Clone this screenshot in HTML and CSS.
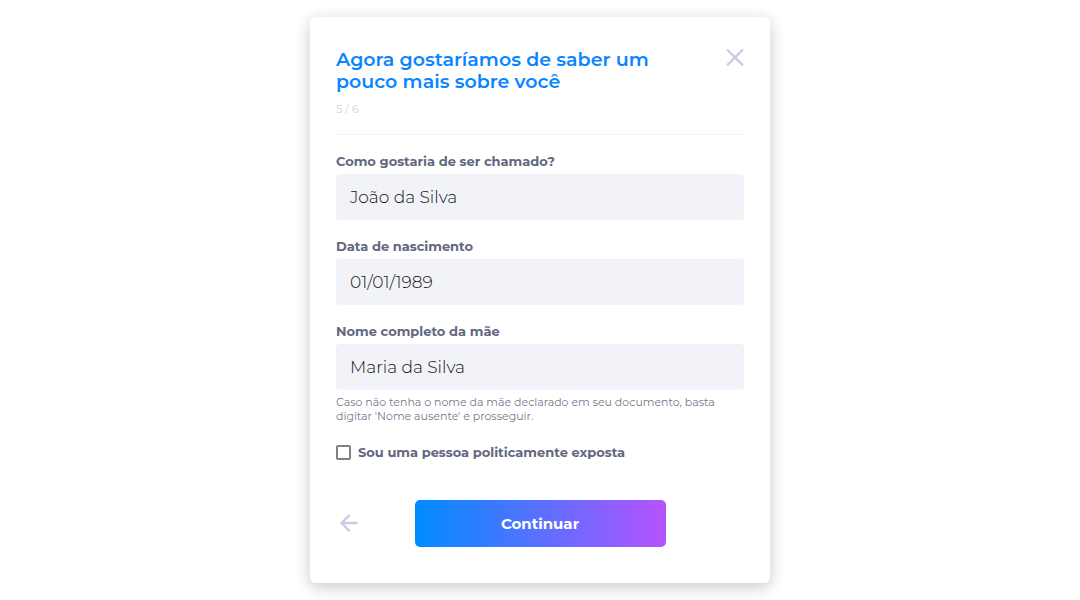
FILE: index.html
```html
<!DOCTYPE html>
<html lang="pt-BR">
<head>
<meta charset="utf-8">
<meta name="viewport" content="width=device-width, initial-scale=1">
<title>Cadastro</title>
<link rel="stylesheet" href="styles.css">
</head>
<body>
<main class="page">
  <form class="card">
    <header class="header">
      <div class="heading">
        <h1 class="title">Agora gostaríamos de saber um pouco mais sobre você</h1>
        <p class="step">5 / 6</p>
      </div>
      <button class="icon-button" type="button" aria-label="Fechar">
        <svg width="18" height="18" viewBox="0 0 18 18" fill="none" stroke="currentColor" stroke-width="2.3" stroke-linecap="round"><path d="M1.8 2.2 16.2 16.6M16.2 2.2 1.8 16.6"/></svg>
      </button>
    </header>
    <div class="fields">
      <div class="field">
        <label class="label" for="name">Como gostaria de ser chamado?</label>
        <input class="input" id="name" type="text" value="João da Silva">
      </div>
      <div class="field">
        <label class="label" for="birth">Data de nascimento</label>
        <input class="input" id="birth" type="text" value="01/01/1989">
      </div>
      <div class="field">
        <label class="label" for="mother">Nome completo da mãe</label>
        <input class="input" id="mother" type="text" value="Maria da Silva" aria-describedby="mother-hint">
        <p class="hint" id="mother-hint">Caso não tenha o nome da mãe declarado em seu documento, basta digitar 'Nome ausente' e prosseguir.</p>
      </div>
    </div>
    <div class="check">
      <input class="checkbox" id="exposed" type="checkbox">
      <label class="label" for="exposed">Sou uma pessoa politicamente exposta</label>
    </div>
    <footer class="actions">
      <button class="icon-button back" type="button" aria-label="Voltar">
        <svg width="18" height="18" viewBox="0 0 18 18" fill="none" stroke="currentColor" stroke-width="2.3" stroke-linecap="round" stroke-linejoin="round"><path d="M16.5 9H1.5M9 1.5 1.5 9 9 16.5"/></svg>
      </button>
      <button class="submit" type="submit">Continuar</button>
    </footer>
  </form>
</main>
</body>
</html>
```
FILE: styles.css
```css
* {
  box-sizing: border-box;
}

body {
  margin: 0;
  background: #fff;
  font-family: Montserrat, Inter, "Open Sans", sans-serif;
}

.page {
  display: flex;
  justify-content: center;
  padding: 17px 16px;
}

.card {
  width: 100%;
  max-width: 460px;
  padding: 31px 26px 36px;
  border-radius: 6px;
  background: #fff;
  box-shadow: 0 4px 16px rgba(0, 0, 0, 0.22);
}

.header {
  display: flex;
  justify-content: space-between;
  align-items: flex-start;
  gap: 24px;
  padding-bottom: 17px;
  border-bottom: 1px solid #f4f4f6;
}

.heading {
  max-width: 336px;
  padding-top: 1px;
}

.title {
  margin: 0;
  color: #0a85ff;
  font-size: 19px;
  font-weight: 600;
  line-height: 22px;
}

.step {
  margin: 8px 0 0;
  color: #d0d2e0;
  font-size: 11px;
  line-height: 16px;
}

.icon-button {
  display: flex;
  padding: 0;
  border: 0;
  background: none;
  color: #c8cbdf;
  cursor: pointer;
}

.fields {
  display: grid;
  gap: 18px;
  padding-top: 18px;
}

.field {
  display: flex;
  flex-direction: column;
}

.label {
  color: #62677f;
  font-size: 13px;
  font-weight: 700;
  line-height: 16px;
}

.input {
  width: 100%;
  height: 46px;
  margin-top: 5px;
  padding: 0 14px;
  border: 0;
  border-radius: 4px;
  background: #f2f3f8;
  color: #111;
  font-family: inherit;
  font-size: 17px;
  font-weight: 300;
}

.hint {
  margin: 5px 0 0;
  color: #77788c;
  font-size: 11px;
  line-height: 14px;
}

.check {
  display: flex;
  align-items: center;
  gap: 7px;
  margin-top: 21px;
}

.checkbox {
  appearance: none;
  width: 15px;
  height: 15px;
  margin: 0;
  border: 2px solid #808084;
  border-radius: 2px;
  background: #fff;
}

.checkbox:checked {
  background: #0a85ff;
}

.actions {
  display: grid;
  grid-template-columns: 1fr 251px 1fr;
  align-items: center;
  margin-top: 40px;
}

.back {
  justify-self: start;
  margin: 0 0 2px 4px;
}

.submit {
  height: 47px;
  border: 0;
  border-radius: 5px;
  background: linear-gradient(90deg, #008cff, #b553ff);
  color: #fff;
  font-family: inherit;
  font-size: 15px;
  font-weight: 700;
  cursor: pointer;
}
```
